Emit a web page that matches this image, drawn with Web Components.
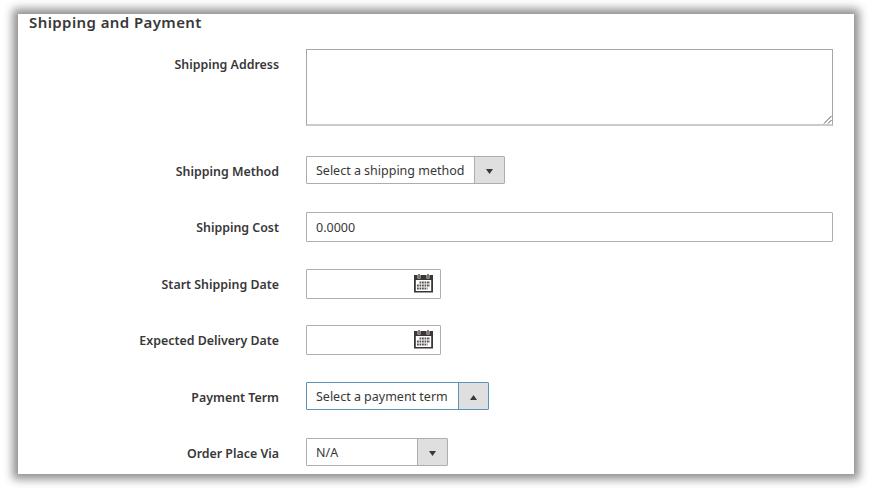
<!DOCTYPE html>
<html lang="en"><head><meta charset="utf-8"><title>Shipping and Payment</title>
<style>html,body{margin:0;background:#fff}body{width:872px;height:488px;overflow:hidden;font-family:"Noto Sans","Open Sans",sans-serif;color:#383838}</style>
</head><body>
<form-panel heading="Shipping and Payment">
<form-row label="Shipping Address" style="--h:77px;--align:flex-start;--pt:7px"><text-area></text-area></form-row>
<form-row label="Shipping Method" style="--gap:30px;--h:28px;--pt:3px"><drop-down style="width:199px">Select a shipping method</drop-down></form-row>
<form-row label="Shipping Cost" style="--h:30px;--pt:1px"><text-field>0.0000</text-field></form-row>
<form-row label="Start Shipping Date" style="--gap:27px;--h:30px;--pt:1px"><date-field></date-field></form-row>
<form-row label="Expected Delivery Date" style="--gap:26px;--h:30px;--pt:1px"><date-field></date-field></form-row>
<form-row label="Payment Term" style="--gap:27px;--h:28px;--pt:3px"><drop-down open style="width:183px">Select a payment term</drop-down></form-row>
<form-row label="Order Place Via" style="--h:28px;--pt:3px"><drop-down style="width:142px">N/A</drop-down></form-row>
</form-panel>
<script>
function define(name, render) {
  customElements.define(name, class extends HTMLElement {
    constructor() { super(); this.attachShadow({ mode: 'open' }); }
    connectedCallback() { this.shadowRoot.innerHTML = render(this); }
  });
}
define('form-panel', el => `<style>
:host{display:block;box-sizing:border-box;width:836px;height:460px;margin:14px 0 0 18px;background:#fff;box-shadow:0 0 9px 5px rgba(0,0,0,.46)}
h2{margin:0;padding-left:11px;height:35px;font-size:15px;line-height:17px;font-weight:600;letter-spacing:.41px;white-space:nowrap}
</style><h2>${el.getAttribute('heading')}</h2><slot></slot>`);
define('form-row', el => `<style>
:host{display:grid;grid-template-columns:261px 527px;column-gap:27px;height:var(--h);margin-top:var(--gap,28px)}
:host(:first-child){margin-top:0}
label{display:flex;box-sizing:border-box;justify-content:flex-end;align-items:var(--align,center);padding-top:var(--pt,0);font-size:12.4px;line-height:18px;font-weight:600;white-space:nowrap}
</style><label>${el.getAttribute('label')}</label><slot></slot>`);
define('text-area', () => `<style>
:host{display:flex;box-sizing:border-box;height:77px;border:1px solid #a6a6a6;border-bottom:2px solid #cbcbcb;align-items:flex-end;justify-content:flex-end}
svg{display:block}</style><svg width="9" height="9" viewBox="0 0 9 9" fill="none" stroke="#555"><path d="M1 8.5 8.5 1M5 8.5 8.5 5"/></svg>`);
define('text-field', () => `<style>
:host{display:flex;box-sizing:border-box;align-items:center;border:1px solid #adadad;border-radius:1px;padding-left:9px;font-size:12.5px}</style><slot></slot>`);
define('drop-down', el => `<style>
:host{--line:#adadad;display:flex;box-sizing:border-box;border:1px solid var(--line);border-radius:1px;font-size:12.5px;white-space:nowrap;line-height:26px}
:host([open]){--line:#5b93b9}
span{flex:1;padding:1px 0 0 9px;line-height:26px;height:26px;box-sizing:border-box;letter-spacing:-.01px}
i{display:flex;box-sizing:border-box;width:30px;background:#dfdfdf;border-left:1px solid var(--line);align-items:center;justify-content:center;padding-top:3px}
</style><span><slot></slot></span><i><svg width="7" height="5" viewBox="0 0 7 5" fill="#41362f"><path d="${el.hasAttribute('open') ? 'M0 5 3.5 0 7 5z' : 'M0 0h7L3.5 5z'}"/></svg></i>`);
define('date-field', () => `<style>
:host{display:flex;box-sizing:border-box;width:135px;border:1px solid #b0b0b0;border-radius:1px;align-items:flex-start;justify-content:flex-end;padding:4px 7px 0 0}
svg{display:block}</style><svg width="19" height="19" viewBox="0 0 19 19">
<path fill="#3b3536" fill-rule="evenodd" d="M0 1h19v17.5H0zM1.8 6v11h15.4V6z"/>
<path stroke="#ddd" stroke-width="3" d="M5 1v3.6M14 1v3.6"/><path stroke="#6b6463" stroke-width="1.7" d="M5 0v4M14 0v4"/>
<path stroke="#5a5050" stroke-width="2" stroke-dasharray="1.8 .7" d="M5.5 8.5H16M3 11.5H16M3 14.5H13.5"/></svg>`);
</script></body></html>
